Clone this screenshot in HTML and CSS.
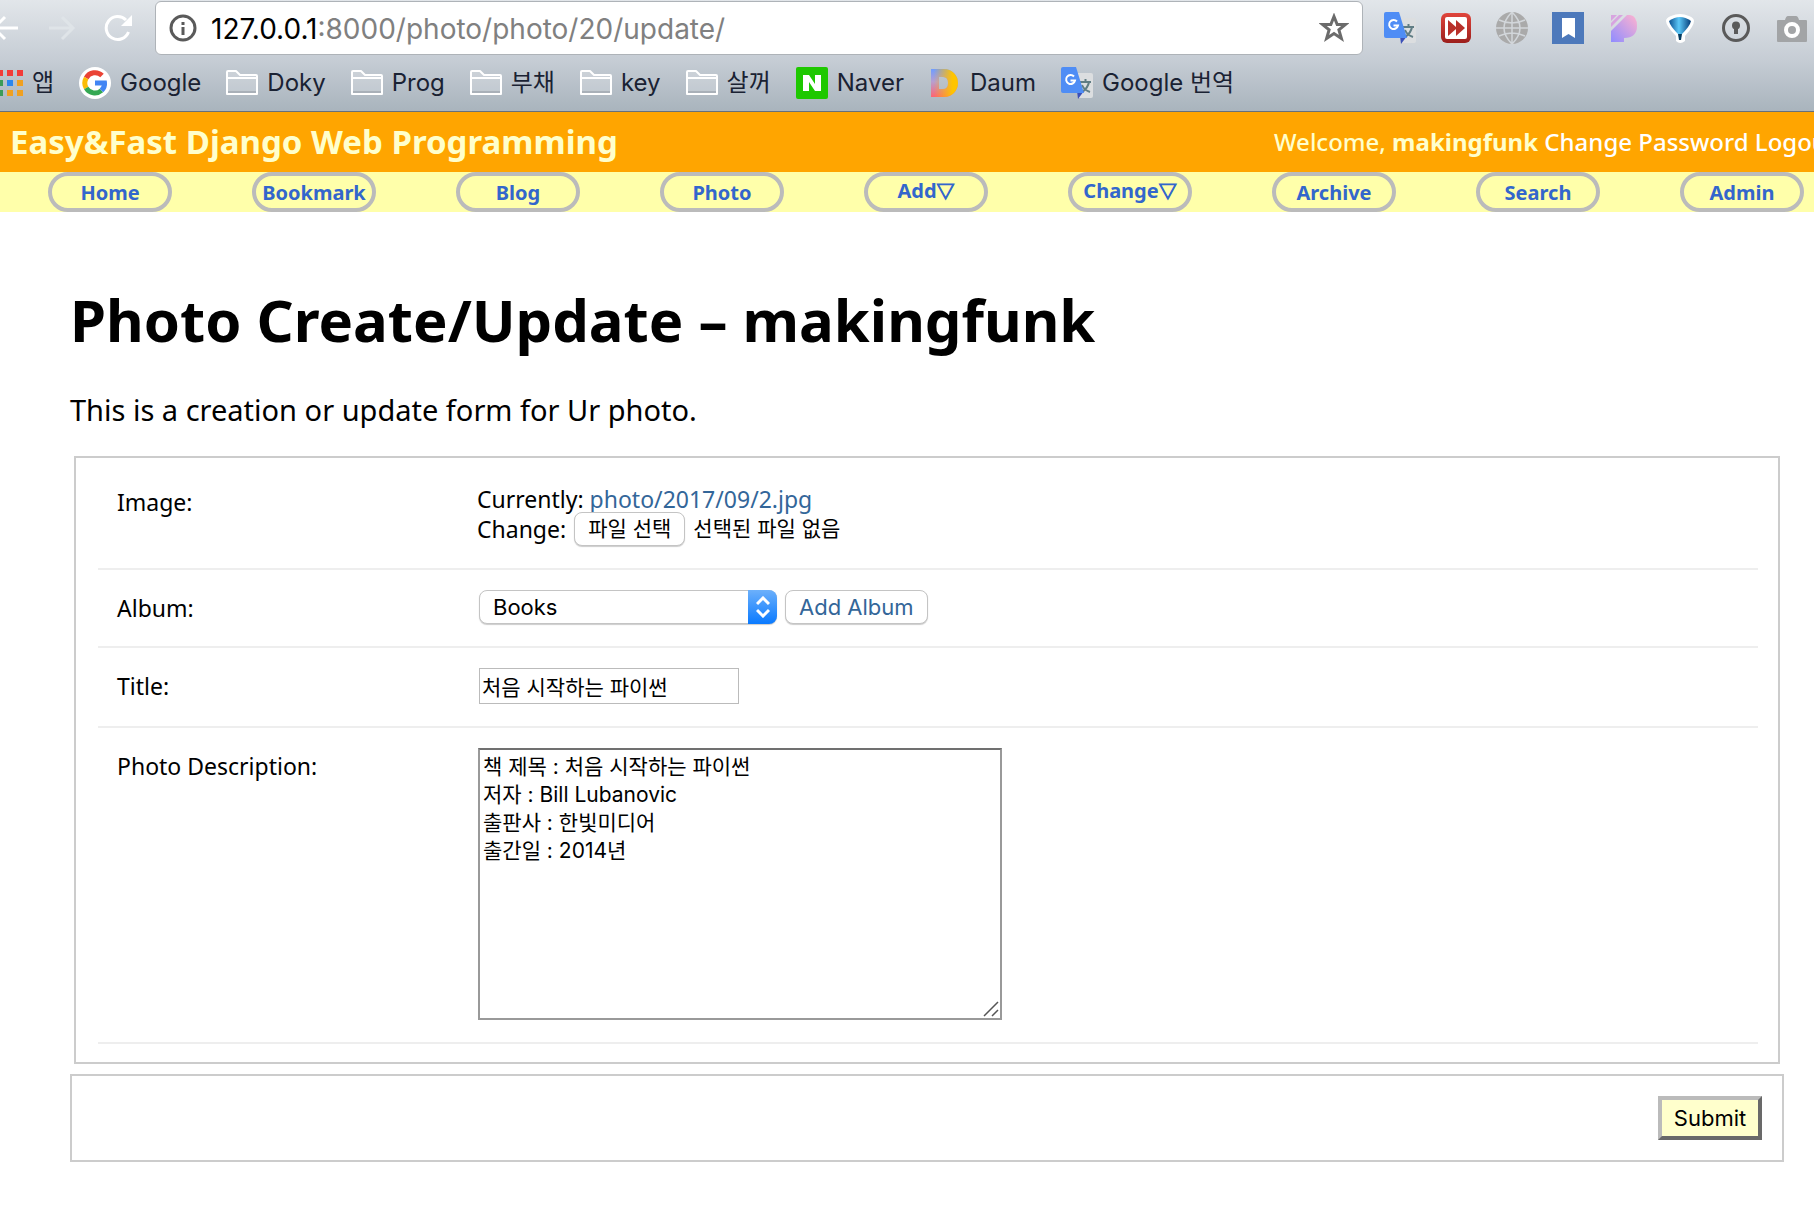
FILE: index.html
```html
<!DOCTYPE html>
<html lang="ko">
<head>
<meta charset="utf-8">
<title>Photo Create/Update</title>
<link rel="stylesheet" href="styles.css">
</head>
<body>
<svg width="0" height="0" class="defs" aria-hidden="true">
  <defs>
    <linearGradient id="daum-a" x1="0" y1="0" x2="0" y2="1"><stop offset="0" stop-color="#6f9dff"/><stop offset=".45" stop-color="#b79fd0"/><stop offset="1" stop-color="#ff6470"/></linearGradient>
    <linearGradient id="daum-b" x1="0" y1="0" x2="1" y2="0"><stop offset=".1" stop-color="#ffb400" stop-opacity="0"/><stop offset=".8" stop-color="#ffc400"/></linearGradient>
    <linearGradient id="pink" x1="0" y1="1" x2="1" y2="0"><stop offset="0" stop-color="#8f8cff"/><stop offset="1" stop-color="#ffb3cf"/></linearGradient>
    <linearGradient id="red" x1="0" y1="0" x2="0" y2="1"><stop offset="0" stop-color="#e0453c"/><stop offset="1" stop-color="#9c1f1c"/></linearGradient>
    <linearGradient id="balloon" x1="0" y1="0" x2="1" y2="0"><stop offset="0" stop-color="#0a4f90"/><stop offset=".45" stop-color="#5cc8f8"/><stop offset="1" stop-color="#053c78"/></linearGradient>
    <symbol id="folder" viewBox="0 0 32 26"><path d="M1 24V2q0-1 1-1h8l4 4h16q1 0 1 1v18z" fill="#fff" fill-opacity=".2" stroke="#fff" stroke-width="2" stroke-linejoin="round"/><path d="M2 8h28" stroke="#fff" stroke-width="2"/><path d="M2 22h28" stroke="#a9b0b8" stroke-width="2"/></symbol>
    <symbol id="translate" viewBox="0 0 32 32"><path d="M14 6h16q2 0 2 2v21q0 2-2 2H18z" fill="#dcdee0"/><path d="M19 15h11M24.500 12v3M28 15q-1 6-7 10M21 18q2 5 8 7" fill="none" stroke="#607d84" stroke-width="2"/><path d="M16 24h7l-6 8z" fill="#3c50b8"/><path d="M2 0h13l8 26H2q-2 0-2-2V2q0-2 2-2z" fill="#4f8df5"/><path d="M13 9.500A4.500 4.500 0 1 0 14 13.500H9.500" fill="none" stroke="#fff" stroke-width="2"/></symbol>
  </defs>
</svg>

<div class="browser">
  <div class="toolbar">
    <div class="history">
      <button type="button" class="icon-button back" aria-label="Back"><svg width="28" height="28" viewBox="0 0 28 28"><path d="M27 14H4M14 3L3 14l11 11" fill="none" stroke="#fff" stroke-width="3"/></svg></button>
      <button type="button" class="icon-button" aria-label="Forward"><svg width="28" height="28" viewBox="0 0 28 28"><path d="M1 14h23M14 3l11 11-11 11" fill="none" stroke="#dfe4e8" stroke-width="3"/></svg></button>
      <button type="button" class="icon-button" aria-label="Reload"><svg width="28" height="28" viewBox="0 0 28 28"><path d="M22 6A11.500 11.500 0 1 0 24.500 18" fill="none" stroke="#fff" stroke-width="3"/><path d="M28 1v11H17z" fill="#fff"/></svg></button>
    </div>
    <div class="address">
      <svg width="28" height="28" viewBox="0 0 28 28"><circle cx="14" cy="14" r="12" fill="none" stroke="#5a5a5a" stroke-width="3"/><path d="M12.500 8h3v3h-3zM12.500 13h3v8h-3z" fill="#5a5a5a"/></svg>
      <span class="url"><span class="host">127.0.0.1</span>:8000/photo/photo/20/update/</span>
      <svg width="30" height="30" viewBox="0 0 30 30"><path d="M15 3.500l3.200 8h8.300l-6.600 5.300 2.500 8.700-7.400-5-7.400 5 2.500-8.700L3.500 11.500h8.300z" fill="none" stroke="#6b6b6b" stroke-width="3"/></svg>
    </div>
    <div class="extensions">
      <svg viewBox="0 0 32 32"><use href="#translate"/></svg>
      <svg viewBox="0 0 32 32"><rect x="1" y="1" width="30" height="30" rx="6" fill="url(#red)"/><rect x="5" y="5" width="22" height="22" rx="2" fill="#fff"/><path d="M8 8l8 7V8l9 8-9 8v-7l-8 7z" fill="#b8302a"/></svg>
      <svg viewBox="0 0 32 32"><circle cx="16" cy="16" r="16" fill="#aaa"/><path d="M0 16h32M16 0v32M3 8q13 6 26 0M3 24q13-6 26 0M16 0q-16 16 0 32M16 0q16 16 0 32" fill="none" stroke="#d2d6da" stroke-width="1.500"/></svg>
      <svg viewBox="0 0 32 32"><path d="M0 0h32v32H0z" fill="#4d79bb"/><path d="M10 6h13v20l-6.500-4L10 26z" fill="#fff"/></svg>
      <svg viewBox="0 0 32 32"><path d="M3 19L19 3h3q7 1 7 11 0 12-13 12v4H3z" fill="url(#pink)"/><path d="M3 9V3h6zM3 15L15 3h-4L3 11z" fill="#d8a4e0"/></svg>
      <svg viewBox="0 0 32 32"><path d="M2 9q0-3 5-5 9-4 18 0 5 2 5 5 0 5-9 15v5q-5 4-9 0v-5Q2 14 2 9z" fill="#fff"/><path d="M5 9q11-8 22 0-1 5-9 13h-4Q6 14 5 9z" fill="url(#balloon)"/><path d="M14 22h4l-1 6h-2z" fill="#053c60"/></svg>
      <svg viewBox="0 0 32 32"><circle cx="16" cy="16" r="12.500" fill="none" stroke="#5a5a5a" stroke-width="3"/><circle cx="16" cy="13.500" r="4" fill="#5a5a5a"/><path d="M14 14h4v8h-4z" fill="#5a5a5a"/></svg>
      <svg viewBox="0 0 32 32"><path d="M2 8h7q1-4 3-4h8q2 0 3 4h7q1 0 1 1v20q0 1-1 1H2q-1 0-1-1V9q0-1 1-1z" fill="#a2a4a6"/><circle cx="16" cy="18" r="6" fill="none" stroke="#fff" stroke-width="4"/></svg>
    </div>
  </div>
  <nav class="bookmarks">
    <a href="#"><svg width="23" height="28" viewBox="0 0 23 28"><path d="M-3 1h6v6h-6zM7 1h6v6H7zM17 1h6v6h-6z" fill="#f23b38"/><path d="M-3 11h6v6h-6zM-3 21h6v6h-6z" fill="#3b9c57"/><path d="M7 11h6v6H7z" fill="#2b86ee"/><path d="M17 11h6v6h-6zM7 21h6v6H7zM17 21h6v6h-6z" fill="#f0a020"/></svg>앱</a>
    <a href="#"><svg width="32" height="32" viewBox="0 0 32 32"><circle cx="16" cy="16" r="16" fill="#fff"/><g fill="none" stroke-width="5"><path d="M23 8.500A10 10 0 0 0 7.200 11" stroke="#ea4335"/><path d="M7.200 11A10 10 0 0 0 7.200 21" stroke="#fbbc05"/><path d="M7.200 21A10 10 0 0 0 22.500 23.500" stroke="#34a853"/><path d="M22.500 23.500Q26 20 25.500 16H16" stroke="#4285f4"/></g></svg>Google</a>
    <a href="#"><svg width="32" height="26"><use href="#folder"/></svg>Doky</a>
    <a href="#"><svg width="32" height="26"><use href="#folder"/></svg>Prog</a>
    <a href="#"><svg width="32" height="26"><use href="#folder"/></svg>부채</a>
    <a href="#"><svg width="32" height="26"><use href="#folder"/></svg>key</a>
    <a href="#"><svg width="32" height="26"><use href="#folder"/></svg>살꺼</a>
    <a href="#"><svg width="32" height="32" viewBox="0 0 32 32"><rect width="32" height="32" rx="2" fill="#1ec800"/><path d="M7 8h6l6 9V8h6v16h-6l-6-9v9H7z" fill="#fff"/></svg>Naver</a>
    <a href="#"><svg width="32" height="32" viewBox="0 0 32 32"><path d="M2 2h13a14 14 0 0 1 0 28H2zM10 10v12h4q5 0 5-6t-5-6z" fill-rule="evenodd" fill="url(#daum-a)"/><path d="M2 2h13a14 14 0 0 1 0 28H2zM10 10v12h4q5 0 5-6t-5-6z" fill-rule="evenodd" fill="url(#daum-b)"/></svg>Daum</a>
    <a href="#"><svg width="32" height="32"><use href="#translate"/></svg>Google 번역</a>
  </nav>
</div>

<header class="site-header">
  <div class="site-title">Easy&amp;Fast Django Web Programming</div>
  <div class="welcome">Welcome, <strong>makingfunk</strong> <a href="#">Change Password</a> <a href="#">Logout</a></div>
</header>
<nav class="menu">
  <a href="#">Home</a>
  <a href="#">Bookmark</a>
  <a href="#">Blog</a>
  <a href="#">Photo</a>
  <a href="#" class="drop">Add<span class="caret">▽</span></a>
  <a href="#" class="drop">Change<span class="caret">▽</span></a>
  <a href="#">Archive</a>
  <a href="#">Search</a>
  <a href="#">Admin</a>
</nav>

<main>
  <h1>Photo Create/Update – makingfunk</h1>
  <p class="intro">This is a creation or update form for Ur photo.</p>
  <form>
    <div class="fields">
      <div class="row">
        <label for="image">Image:</label>
        <div class="file">
          <div>Currently: <a href="#">photo/2017/09/2.jpg</a></div>
          <div class="change">Change:
            <input type="file" id="image" class="file-input">
            <label for="image" class="button">파일 선택</label>
            <span class="file-name">선택된 파일 없음</span>
          </div>
        </div>
      </div>
      <div class="row">
        <label for="album">Album:</label>
        <div class="controls">
          <div class="select">
            <select id="album"><option>Books</option></select>
            <span class="stepper"><svg width="14" height="22" viewBox="0 0 14 22"><path d="M1 8l6-6 6 6M1 14l6 6 6-6" fill="none" stroke="#fff" stroke-width="3"/></svg></span>
          </div>
          <button type="button" class="button add">Add Album</button>
        </div>
      </div>
      <div class="row">
        <label for="title">Title:</label>
        <div class="controls"><input type="text" id="title" value="처음 시작하는 파이썬"></div>
      </div>
      <div class="row">
        <label for="description">Photo Description:</label>
        <div class="controls"><div class="area"><textarea id="description">책 제목 : 처음 시작하는 파이썬
저자 : Bill Lubanovic
출판사 : 한빛미디어
출간일 : 2014년</textarea><svg class="grip" width="16" height="16" viewBox="0 0 16 16"><path d="M1 15L15 1M9 15l6-6" stroke="#555" stroke-width="1.500"/></svg></div></div>
      </div>
    </div>
    <div class="submit-row"><button type="submit" class="submit">Submit</button></div>
  </form>
</main>
</body>
</html>
```
FILE: styles.css
```css
* { box-sizing: border-box; }

body {
  margin: 0;
  background: #fff;
  color: #000;
  font-family: "Noto Sans", "Noto Sans CJK KR", sans-serif;
  font-size: 23px;
  line-height: 30px;
  overflow-x: hidden;
}

a { text-decoration: none; }
svg { flex: none; display: block; }
.defs { position: absolute; }

/* Browser bars */
.browser {
  background: linear-gradient(#e2e6ea, #c5ccd4 55%, #a9b4bd);
  border-bottom: 1px solid #66707a;
  font-family: Inter, "Noto Sans CJK KR", sans-serif;
}

.toolbar {
  display: flex;
  align-items: center;
  padding-top: 1px;
}

.history {
  display: flex;
  justify-content: space-between;
  width: 132px;
  margin-right: 23px;
}

.icon-button {
  padding: 0;
  border: 0;
  background: none;
}

.back { margin-left: -9px; }

.address {
  flex: 1;
  display: flex;
  align-items: center;
  gap: 14px;
  height: 54px;
  padding: 0 13px;
  background: #fff;
  border: 1px solid #aeb3b8;
  border-radius: 6px;
}

.url {
  flex: 1;
  padding-top: 2px;
  color: #808080;
  font-size: 28px;
}

.host { color: #000; }

.extensions {
  display: flex;
  gap: 24px;
  padding: 0 6px 0 21px;
}

.extensions svg {
  width: 32px;
  height: 32px;
}

.bookmarks {
  display: flex;
  gap: 25px;
  height: 56px;
  align-items: center;
}

.bookmarks a {
  display: flex;
  align-items: center;
  gap: 9px;
  color: #1a2233;
  font-size: 24px;
  white-space: nowrap;
}

/* Site header */
.site-header {
  display: flex;
  align-items: center;
  justify-content: space-between;
  height: 60px;
  padding-left: 10px;
  background: #ffa500;
  color: #ffffcc;
  white-space: nowrap;
  overflow: hidden;
}

.site-title {
  font-size: 33px;
  font-weight: 700;
}

.welcome {
  flex: 0 0 540px;
  min-width: 0;
  font-size: 24px;
  font-weight: 500;
}

.welcome a { color: #fff; }

.menu {
  display: flex;
  justify-content: space-between;
  padding: 0 10px 0 48px;
  background: #ffffaa;
}

.menu a {
  width: 124px;
  height: 40px;
  border: 4px solid #bbb;
  border-radius: 20px;
  color: #3366cc;
  font-size: 20px;
  font-weight: 700;
  line-height: 34px;
  text-align: center;
  white-space: nowrap;
}

.menu .drop { line-height: 30px; }

.caret {
  font-size: 18px;
  -webkit-text-stroke: 1px #3366cc;
}

/* Form page */
main { padding: 68px 30px 40px 70px; }

h1 {
  margin: 0 0 32px;
  font-size: 58px;
  line-height: 80px;
}

.intro {
  margin: 0 0 28px;
  font-size: 29px;
  line-height: 36px;
}

.fields {
  margin: 0 4px 10px;
  padding: 8px 20px 18px 22px;
  border: 2px solid #ccc;
}

.row {
  display: grid;
  grid-template-columns: 360px 1fr;
  padding: 20px 0 22px 19px;
  border-bottom: 2px solid #eee;
}

.row:first-child { padding: 18px 0 24px 19px; }

.row > label { padding-top: 3px; }

.row a,
.add { color: #336699; }

.file { line-height: 30px; }

.change {
  display: flex;
  align-items: center;
  height: 30px;
  gap: 8px;
}

.file-input {
  position: absolute;
  width: 1px;
  height: 1px;
  opacity: 0;
}

.controls {
  display: flex;
  gap: 8px;
  padding-left: 2px;
}

.button,
.file-name,
select,
input,
textarea,
.submit {
  font-family: Inter, "Noto Sans CJK KR", sans-serif;
  font-size: 21px;
}

.button {
  height: 34px;
  padding: 0 13px;
  background: #fff;
  border: 1px solid #c4c4c4;
  border-radius: 8px;
  box-shadow: 0 1px 1px #ccc;
  line-height: 32px;
}

.add,
select,
.submit { font-size: 22px; }

.select {
  position: relative;
  width: 298px;
}

select {
  appearance: none;
  width: 100%;
  height: 34px;
  padding: 0 40px 0 13px;
  background: #fff;
  border: 1px solid #c4c4c4;
  border-radius: 8px;
  box-shadow: 0 1px 1px #ccc;
  color: #000;
}

.stepper {
  position: absolute;
  top: 0;
  right: 0;
  display: grid;
  place-items: center;
  width: 29px;
  height: 34px;
  background: linear-gradient(#6cb0fb, #0a7aff);
  border-radius: 0 8px 8px 0;
  pointer-events: none;
}

input[type="text"] {
  width: 260px;
  height: 36px;
  padding: 0 2px;
  border: 1px solid #bbb;
}

.area {
  position: relative;
  margin-left: -1px;
}

textarea {
  display: block;
  width: 524px;
  height: 272px;
  padding: 3px;
  border: 2px solid #999;
  border-top-color: #707070;
  line-height: 28px;
  resize: none;
}

.grip {
  position: absolute;
  right: 3px;
  bottom: 3px;
}

.submit-row {
  display: flex;
  justify-content: flex-end;
  padding: 20px;
  border: 2px solid #ccc;
}

.submit {
  width: 104px;
  height: 44px;
  padding: 0;
  background: #ffffcc;
  border: 4px solid;
  border-color: #bbb #696969 #696969 #bbb;
}
```
